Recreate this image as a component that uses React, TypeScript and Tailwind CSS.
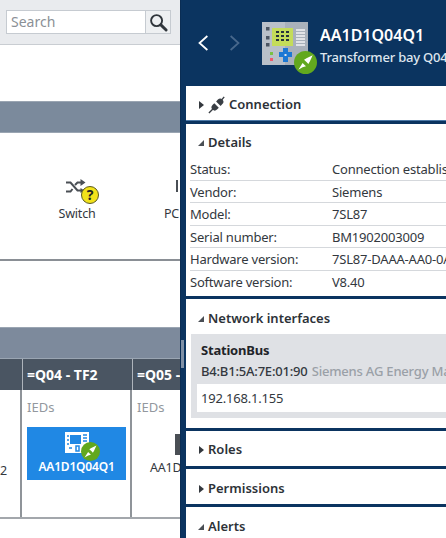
import type { ReactNode } from "react";

const details = [
  ["Status:", "Connection established"],
  ["Vendor:", "Siemens"],
  ["Model:", "7SL87"],
  ["Serial number:", "BM1902003009"],
  ["Hardware version:", "7SL87-DAAA-AA0-0AA0"],
  ["Software version:", "V8.40"],
];

function PlugBadge({ className }: { className: string }) {
  return (
    <svg viewBox="0 0 24 24" className={className}>
      <circle cx="12" cy="12" r="12" fill="#62a81e" />
      <path d="M4.500 19.500L9 12.500l2.500 2.500-1-1L13 11.500 10.500 9 13 7.500 19.500 4.500 16.500 11l-1.500 2.500-2-2-2.500 2.500 2 2L9 17z" fill="#fff" />
    </svg>
  );
}

function DeviceIcon() {
  return (
    <svg viewBox="0 0 46 44" className="w-[46px] h-[44px]">
      <rect width="46" height="43" fill="#b9c0c9" />
      <rect x="23" width="23" height="43" fill="#a9b1bb" />
      <rect x="4" y="5" width="3.500" height="3.500" fill="#4b5563" />
      <rect x="4" y="14" width="3.500" height="3.500" fill="#4b5563" />
      <rect x="4" y="21" width="3.500" height="3.500" fill="#4b5563" />
      <rect x="10" y="6" width="21" height="18" fill="#c4dc5a" />
      <path d="M14 10h3M19 10h3M24 10h3M14 14h3M19 14h3M24 14h3M14 18h3M19 18h3M24 18h3" stroke="#27323d" strokeWidth="2" />
      <path d="M34 8h9M34 11h9M34 14h9M34 17h9M34 20h9M34 23h9" stroke="#f3f4f6" strokeWidth="1.300" />
      <rect x="8" y="30" width="3" height="3" fill="#7ac143" />
      <rect x="8" y="36" width="3" height="3" fill="#ee5a6b" />
      <path d="M21 26h5v4h4v5h-4v5h-5v-5h-4v-5h4z" fill="#1c78d4" />
      <rect x="22.500" y="32" width="2" height="2" fill="#e5e7eb" />
    </svg>
  );
}

function TileIcon() {
  return (
    <svg viewBox="0 0 24 22" className="w-[24px] h-[22px]">
      <rect width="24" height="21" fill="#fff" />
      <rect x="5" y="3" width="11" height="9" fill="#2088e4" />
      <path d="M2 4h2M2 8h2M2 12h2M18 3h4M18 6h4M18 9h4" stroke="#2088e4" strokeWidth="1.500" />
      <path d="M4 16h3M11 14h3v5h-3z" stroke="#2088e4" strokeWidth="1.500" fill="none" />
    </svg>
  );
}

function SectionTitle({ open, children, icon }: { open?: boolean; children: ReactNode; icon?: ReactNode }) {
  return (
    <div className="flex items-center h-[34px] pl-[11px] pt-[3px]">
      {open ? (
        <svg viewBox="0 0 8 8" className="w-[8px] h-[8px] mr-[3px]">
          <path d="M7 1v6H1z" fill="#4a4f55" />
        </svg>
      ) : (
        <svg viewBox="0 0 8 8" className="w-[8px] h-[8px] mr-[3px]">
          <path d="M2 0l5 4-5 4z" fill="#33383e" />
        </svg>
      )}
      {icon}
      <span className="text-[13px] font-semibold text-[#2d3238]">{children}</span>
    </div>
  );
}

export default function App() {
  return (
    <div className="flex w-[446px] h-[538px] overflow-hidden bg-white text-[#2d3238] font-['Noto_Sans','Open_Sans',sans-serif]">
      <div className="w-[180px] shrink-0 flex flex-col overflow-hidden">
        <div className="h-[45px] shrink-0 bg-[#e9ebee] border-b border-[#c9cdd2] pt-[10px] pl-[6px]">
          <div className="flex w-[165px] h-[24px] border border-[#c6cbd1] bg-white">
            <span className="flex-1 pl-[4px] text-[14px] leading-[22px] text-[#8b9096]">Search</span>
            <div className="w-[25px] border-l border-[#c6cbd1] bg-[#eef0f2] flex items-center justify-center">
              <svg viewBox="0 0 20 20" className="w-[19px] h-[19px]">
                <circle cx="8" cy="8" r="5.800" fill="none" stroke="#30363c" strokeWidth="2" />
                <path d="M12.500 12.500l5.500 5.500" stroke="#30363c" strokeWidth="3" strokeLinecap="round" />
              </svg>
            </div>
          </div>
        </div>
        <div className="h-[56px] shrink-0" />
        <div className="h-[32px] shrink-0 bg-[#7b8a9c] border-y border-[#9aa5b2]" />
        <div className="h-[128px] shrink-0 border-b-2 border-[#8a8f95] flex pl-[33px] pt-[47px] text-[12.500px] tracking-[-0.2px] text-[#33383e]">
          <div className="w-[88px] shrink-0 flex flex-col items-center">
            <div className="relative h-[20px] w-[30px]">
              <svg viewBox="0 0 22 16" className="absolute left-[3px] top-[-1px] w-[22px] h-[16px]">
                <path d="M1 3.500h4.500l7 8H16M1 12.500h4.500l2-2.500M10 6l2.500-2.500H16" fill="none" stroke="#4a4f55" strokeWidth="2" />
                <path d="M15.500 0l5 3.500-5 3.500zM15.500 9l4 2.500-4 2.500z" fill="#4a4f55" />
              </svg>
              <div className="absolute left-[19px] top-[6px] w-[18px] h-[18px] rounded-full bg-[#f2e21a] border border-[#5b5a20] flex items-center justify-center text-[14px] font-bold leading-none text-[#222]">
                ?
              </div>
            </div>
            <span className="mt-[5px]">Switch</span>
          </div>
          <div className="w-[58px] shrink-0 flex flex-col items-end">
            <div className="w-[2px] h-[12px] mr-[1px] bg-[#4a4f55]" />
            <span className="mt-[13px] w-[15px] overflow-hidden">PC</span>
          </div>
        </div>
        <div className="h-[66px] shrink-0" />
        <div className="h-[32px] shrink-0 bg-[#7d8a9c] border-y border-[#9aa5b2]" />
        <div className="flex h-[160px] shrink-0 border-b-2 border-[#a3a7ac]">
          <div className="w-[22px] shrink-0 flex flex-col">
            <div className="h-[31px] bg-[#4a5562]" />
            <div className="flex-1 border-r-2 border-[#8f9499] text-right pr-[16px] pt-[72px] text-[12.500px] text-[#33383e]">2</div>
          </div>
          <div className="w-[110px] shrink-0 flex flex-col">
            <div className="h-[31px] bg-[#4a5562] border-l border-[#aeb4bb] pl-[4px] text-[14px] font-bold leading-[31px] text-white whitespace-nowrap">
              =Q04 - TF2
            </div>
            <div className="flex-1 border-r-2 border-[#8f9499] pl-[5px] pt-[8px]">
              <div className="text-[13px] leading-[18px] text-[#93989e]">IEDs</div>
              <div className="mt-[11px] w-[99px] h-[53px] bg-[#2088e4] flex flex-col items-center pt-[5px]">
                <div className="relative w-[24px] h-[22px]">
                  <TileIcon />
                  <PlugBadge className="absolute left-[16px] top-[10px] w-[19px] h-[19px]" />
                </div>
                <span className="mt-[5px] text-[12px] tracking-[-0.2px] font-semibold leading-[16px] text-white">AA1D1Q04Q1</span>
              </div>
            </div>
          </div>
          <div className="flex-1 min-w-0 flex flex-col overflow-hidden">
            <div className="h-[31px] bg-[#4a5562] border-l border-[#aeb4bb] pl-[4px] text-[14px] font-bold leading-[31px] text-white whitespace-nowrap">
              =Q05 - TF3
            </div>
            <div className="pl-[5px] pt-[8px]">
              <div className="text-[13px] leading-[18px] text-[#93989e]">IEDs</div>
              <div className="mt-[18px] ml-[38px] w-[10px] h-[21px] bg-[#4a4f55]" />
              <div className="mt-[4px] ml-[13px] text-[12.500px] tracking-[-0.2px] text-[#33383e] whitespace-nowrap">AA1D1Q05Q1</div>
            </div>
          </div>
        </div>
      </div>

      <div className="relative flex-1 min-w-0 bg-[#0b3460] pl-[5px] border-l border-[#0a2d54] flex flex-col overflow-hidden">
        <div className="absolute left-0 top-[340px] w-[3px] h-[28px] bg-[#7f90a6]" />
        <div className="h-[86px] shrink-0 flex pl-[10px] text-white">
          <svg viewBox="0 0 16 20" className="w-[14px] h-[18px] mt-[34px] shrink-0">
            <path d="M13 2L4 10l9 8" fill="none" stroke="#fff" strokeWidth="2" />
          </svg>
          <svg viewBox="0 0 16 20" className="w-[14px] h-[18px] mt-[34px] ml-[18px] shrink-0">
            <path d="M3 2l9 8-9 8" fill="none" stroke="#48688c" strokeWidth="2" />
          </svg>
          <div className="relative ml-[20px] mt-[22px] w-[46px] h-[44px] shrink-0">
            <DeviceIcon />
            <PlugBadge className="absolute left-[32px] top-[29px] w-[23px] h-[23px]" />
          </div>
          <div className="ml-[12px] pt-[22px] whitespace-nowrap">
            <div className="text-[16px] font-semibold leading-[26px]">AA1D1Q04Q1</div>
            <div className="text-[13px] tracking-[-0.2px] font-medium leading-[18px] text-[#dfe6ee]">Transformer bay Q04 - TF2</div>
          </div>
        </div>

        <div className="h-[35px] shrink-0 bg-white border-b border-[#4d7aa8]">
          <SectionTitle
            icon={
              <svg viewBox="0 0 20 20" className="w-[18px] h-[18px] mr-[3px]">
                <path d="M1 19l5-5M13 7l5-6" stroke="#3a3f45" strokeWidth="1.500" />
                <path d="M5 10l2-2 5 5-2 2a3 3 0 0 1-5-5zM9 6l2-2a3 3 0 0 1 5 5l-2 2z" fill="#3a3f45" />
              </svg>
            }
          >
            Connection
          </SectionTitle>
        </div>

        <div className="h-[172px] mt-[3px] shrink-0 bg-white whitespace-nowrap overflow-hidden">
          <div className="h-[34px]">
            <SectionTitle open>Details</SectionTitle>
          </div>
          {details.map(([label, value], i) => (
            <div key={label} className={`flex h-[22.600px] ml-[4px] text-[13px] tracking-[-0.2px] leading-[22px] text-[#33383e] ${i < 5 ? "border-b border-[#d5d8dc]" : ""}`}>
              <span className="w-[142px] shrink-0">{label}</span>
              <span>{value}</span>
            </div>
          ))}
        </div>

        <div className="h-[129px] mt-[3px] pt-[1px] shrink-0 bg-white whitespace-nowrap overflow-hidden">
          <SectionTitle open>Network interfaces</SectionTitle>
          <div className="ml-[5px] h-[84px] bg-[#dfe1e5] pl-[6px] pt-[7px]">
            <div className="pl-[4px] text-[13px] font-bold tracking-[-0.2px] leading-[18px] text-[#1f2429]">StationBus</div>
            <div className="pl-[4px] mt-[3px] text-[13px] tracking-[-0.2px] font-medium leading-[18px] text-[#33383e]">
              B4:B1:5A:7E:01:90 <span className="ml-[1px] text-[#9aa0a7]">Siemens AG Energy Management</span>
            </div>
            <div className="mt-[4px] h-[28px] bg-white pl-[4px] text-[13px] tracking-[-0.2px] leading-[28px] text-[#33383e]">192.168.1.155</div>
          </div>
        </div>

        <div className="h-[35px] mt-[3px] shrink-0 bg-white">
          <SectionTitle>Roles</SectionTitle>
        </div>
        <div className="h-[35px] mt-[3px] pt-[1px] shrink-0 bg-white">
          <SectionTitle>Permissions</SectionTitle>
        </div>
        <div className="h-[35px] mt-[3px] pt-[1px] shrink-0 bg-white">
          <SectionTitle open>Alerts</SectionTitle>
        </div>
      </div>
    </div>
  );
}
